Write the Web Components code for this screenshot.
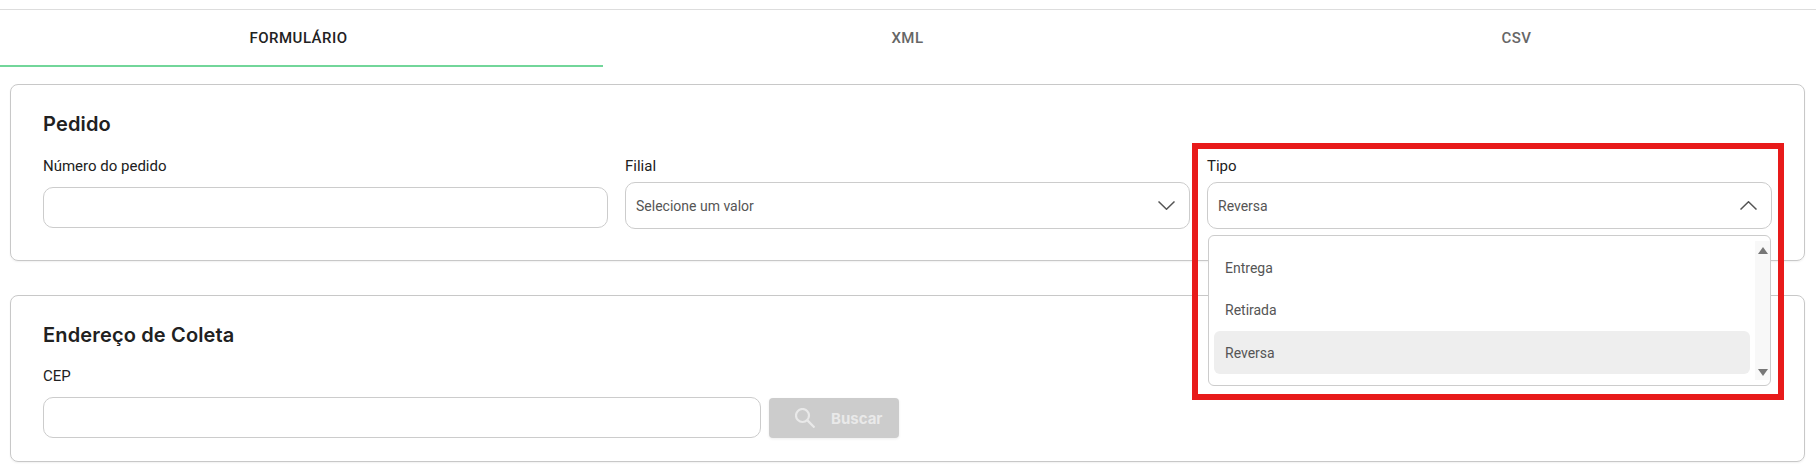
<!DOCTYPE html>
<html lang="pt-BR">
<head>
<meta charset="utf-8">
<title>Pedido</title>
<style>
    html, body { margin: 0; height: 475px; overflow: hidden; background: #fff; }
    body { font-family: Roboto, "Liberation Sans", sans-serif; position: relative; }
    .cards { display: flex; flex-direction: column; gap: 34px; margin: 17px 11px 0 10px; }
    .row { display: grid; grid-template-columns: repeat(3, 565px); column-gap: 17px; }
    .cep { display: flex; gap: 8px; align-items: flex-end; }
</style>
</head>
<body>

<x-tabs>
    <x-tab active>FORMULÁRIO</x-tab>
    <x-tab>XML</x-tab>
    <x-tab>CSV</x-tab>
</x-tabs>

<div class="cards">
    <x-card heading="Pedido" style="--pad-bottom: 31px">
        <div class="row">
            <x-field label="Número do pedido"><x-input></x-input></x-field>
            <x-field label="Filial" tight><x-select value="Selecione um valor"></x-select></x-field>
            <x-field label="Tipo" tight>
                <x-select value="Reversa" open>
                    <x-option>Entrega</x-option>
                    <x-option>Retirada</x-option>
                    <x-option selected>Reversa</x-option>
                </x-select>
            </x-field>
        </div>
    </x-card>
    <x-card heading="Endereço de Coleta" style="--pad-bottom: 23px; --title-gap: 19px">
        <div class="cep">
            <x-field label="CEP" style="width: 718px"><x-input></x-input></x-field>
            <x-button>Buscar</x-button>
        </div>
    </x-card>
</div>

<x-highlight></x-highlight>

<script>
class XTabs extends HTMLElement {
    constructor() {
        super();
        this.attachShadow({ mode: 'open' }).innerHTML = /*html*/ `
        <style>
            :host { display: block; margin-top: 9px; border-top: 1px solid #ddd; }
            .tabs { display: grid; grid-template-columns: repeat(3, 609px); margin-left: -6px; }
        </style>
        <div class="tabs"><slot></slot></div>`;
    }
}

class XTab extends HTMLElement {
    constructor() {
        super();
        this.attachShadow({ mode: 'open' }).innerHTML = /*html*/ `
        <style>
            :host {
                display: flex;
                height: 55px;
                align-items: center;
                justify-content: center;
                border-bottom: 2px solid transparent;
                font: 500 15px Roboto, sans-serif;
                letter-spacing: 0.5px;
                color: #666;
            }
            :host([active]) { color: #222; border-bottom-color: #72d69a; }
        </style>
        <slot></slot>`;
    }
}

class XCard extends HTMLElement {
    constructor() {
        super();
        this.attachShadow({ mode: 'open' }).innerHTML = /*html*/ `
        <style>
            :host {
                display: block;
                padding: 27px 32px var(--pad-bottom, 24px);
                border: 1px solid #c8c8c8;
                border-radius: 8px;
                box-shadow: 0 1px 2px rgba(0, 0, 0, 0.06);
            }
            h2 {
                margin: 0 0 var(--title-gap, 20px);
                font: 600 20px/24px Inter, sans-serif;
                letter-spacing: 0.15px;
                color: #212121;
            }
        </style>
        <h2></h2>
        <slot></slot>`;
        this.shadowRoot.querySelector('h2').textContent = this.getAttribute('heading');
    }
}

class XField extends HTMLElement {
    constructor() {
        super();
        this.attachShadow({ mode: 'open' }).innerHTML = /*html*/ `
        <style>
            :host { display: block; }
            label {
                display: block;
                margin-bottom: 11px;
                font: 400 15px/20px Roboto, sans-serif;
                color: #212121;
            }
            :host([tight]) label { margin-bottom: 6px; }
        </style>
        <label></label>
        <slot></slot>`;
        this.shadowRoot.querySelector('label').textContent = this.getAttribute('label');
    }
}

class XInput extends HTMLElement {
    constructor() {
        super();
        this.attachShadow({ mode: 'open' }).innerHTML = /*html*/ `
        <style>
            :host {
                display: block;
                box-sizing: border-box;
                height: 41px;
                border: 1px solid #ccc;
                border-radius: 10px;
                background: #fff;
            }
        </style>`;
    }
}

class XSelect extends HTMLElement {
    constructor() {
        super();
        const open = this.hasAttribute('open');
        this.attachShadow({ mode: 'open' }).innerHTML = /*html*/ `
        <style>
            :host {
                display: flex;
                position: relative;
                box-sizing: border-box;
                height: 47px;
                padding: 0 14px 0 10px;
                align-items: center;
                justify-content: space-between;
                border: 1px solid #ccc;
                border-radius: 10px;
                background: #fff;
                font: 400 14px Roboto, sans-serif;
                color: #555;
            }
            svg { display: block; fill: none; stroke: #555; stroke-width: 1.5; }
            .menu {
                display: flex;
                position: absolute;
                top: 52px;
                left: 0;
                box-sizing: border-box;
                width: 563px;
                height: 151px;
                border: 1px solid #ccc;
                border-radius: 6px;
                background: #fff;
            }
            .list { flex: 1; display: flex; flex-direction: column; padding: 11px 5px 0 5px; }
            .bar {
                display: flex;
                width: 15px;
                margin: 5px 0;
                padding: 6px 0 4px;
                box-sizing: border-box;
                flex-direction: column;
                justify-content: space-between;
                align-items: center;
                background: #f8f8f8;
            }
            .bar svg { fill: #777; stroke: none; }
        </style>
        <span class="value"></span>
        <svg width="17" height="9" viewBox="0 0 17 9"><path d="${open ? 'M.5 8.5 8.5 .8 16.5 8.5' : 'M.5 .5 8.5 8.2 16.5 .5'}"/></svg>
        ${open ? /*html*/ `
        <div class="menu">
            <div class="list"><slot></slot></div>
            <div class="bar">
                <svg width="10" height="7" viewBox="0 0 10 7"><path d="M5 0 10 7H0z"/></svg>
                <svg width="10" height="7" viewBox="0 0 10 7"><path d="M0 0H10L5 7z"/></svg>
            </div>
        </div>` : ''}`;
        this.shadowRoot.querySelector('.value').textContent = this.getAttribute('value');
    }
}

class XOption extends HTMLElement {
    constructor() {
        super();
        this.attachShadow({ mode: 'open' }).innerHTML = /*html*/ `
        <style>
            :host {
                display: flex;
                flex: none;
                height: 42px;
                padding-left: 11px;
                align-items: center;
                border-radius: 6px;
                font: 400 14px Roboto, sans-serif;
                color: #555;
            }
            :host([selected]) { background: #eee; height: 43px; }
        </style>
        <slot></slot>`;
    }
}

class XButton extends HTMLElement {
    constructor() {
        super();
        this.attachShadow({ mode: 'open' }).innerHTML = /*html*/ `
        <style>
            :host {
                display: flex;
                box-sizing: border-box;
                width: 130px;
                height: 40px;
                padding-left: 26px;
                gap: 16px;
                align-items: center;
                border-radius: 4px;
                background: #ccc;
                box-shadow: 0 1px 3px rgba(0, 0, 0, 0.08);
                font: 700 15px Inter, sans-serif;
                color: #e9e9e9;
            }
            svg { display: block; fill: none; stroke: #e9e9e9; stroke-width: 2.2; }
        </style>
        <svg width="20" height="20" viewBox="0 0 20 20">
            <circle cx="7.5" cy="7.5" r="6.5"/>
            <path d="M12.4 12.4 19.5 19.5"/>
        </svg>
        <slot></slot>`;
    }
}

// red annotation drawn over the screenshot
class XHighlight extends HTMLElement {
    constructor() {
        super();
        this.attachShadow({ mode: 'open' }).innerHTML = /*html*/ `
        <style>
            :host {
                position: absolute;
                top: 143px;
                left: 1192px;
                width: 592px;
                height: 257px;
                box-sizing: border-box;
                border: 6px solid #e81a1a;
                pointer-events: none;
            }
        </style>`;
    }
}

customElements.define('x-tabs', XTabs);
customElements.define('x-tab', XTab);
customElements.define('x-card', XCard);
customElements.define('x-field', XField);
customElements.define('x-input', XInput);
customElements.define('x-select', XSelect);
customElements.define('x-option', XOption);
customElements.define('x-button', XButton);
customElements.define('x-highlight', XHighlight);
</script>
</body>
</html>
